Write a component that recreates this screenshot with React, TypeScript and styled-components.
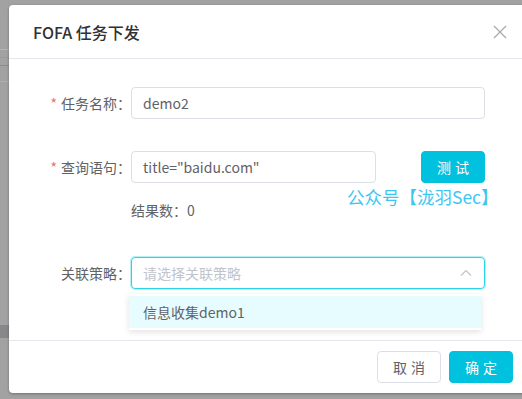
import React from "react";
import styled, { createGlobalStyle } from "styled-components";

const Global = createGlobalStyle`
  html, body { margin: 0; padding: 0; }
  body {
    background: #a2a2a3;
    overflow: hidden;
    width: 522px;
    height: 399px;
    font-family: "Noto Sans CJK SC", "Noto Sans", sans-serif;
  }
`;

const Backdrop = styled.div`
  position: relative;
  width: 522px;
  height: 399px;
  overflow: hidden;
  padding-top: 5px;
  box-sizing: border-box;
`;

const PageLine = styled.div<{ $top: number; $color: string; $h?: number }>`
  position: absolute;
  left: 0;
  width: 9px;
  top: ${(p) => p.$top}px;
  height: ${(p) => p.$h ?? 1}px;
  background: ${(p) => p.$color};
`;

const Dialog = styled.div`
  position: relative;
  margin-left: 9px;
  width: 520px;
  background: #fff;
  border-radius: 4px;
  box-shadow: 0 1px 3px rgba(0, 0, 0, 0.3);
  display: flex;
  flex-direction: column;
`;

const Header = styled.div`
  height: 54px;
  box-sizing: border-box;
  display: flex;
  align-items: center;
  justify-content: space-between;
  padding: 0 22px 0 24px;
  border-bottom: 1px solid #e4e7ed;
`;

const Title = styled.span`
  font-size: 16px;
  font-weight: 500;
  color: #303133;
  line-height: 20px;
`;

const Close = styled.button`
  border: 0;
  background: none;
  padding: 0;
  width: 14px;
  height: 14px;
  display: flex;
  align-items: center;
  justify-content: center;
  cursor: pointer;
`;

const Body = styled.div`
  padding: 28px 44px 0 22px;
  display: flex;
  flex-direction: column;
  height: 281px;
  box-sizing: border-box;
  position: relative;
`;

const Row = styled.div<{ $mb: number }>`
  display: grid;
  grid-template-columns: 100px 1fr;
  align-items: start;
  margin-bottom: ${(p) => p.$mb}px;
`;

const Label = styled.label`
  height: 32px;
  display: flex;
  align-items: center;
  justify-content: flex-end;
  font-size: 14px;
  color: #606266;
`;

const Star = styled.span`
  color: #f56c6c;
  margin-right: 4px;
`;

const Field = styled.div`
  display: flex;
  flex-direction: column;
  position: relative;
`;

const InputLine = styled.div`
  display: flex;
  align-items: center;
  justify-content: space-between;
`;

const Input = styled.div<{ $w?: number; $focus?: boolean }>`
  width: ${(p) => (p.$w ? `${p.$w}px` : "100%")};
  height: 32px;
  box-sizing: border-box;
  border: 1px solid ${(p) => (p.$focus ? "#2ad3ea" : "#dcdfe6")};
  box-shadow: ${(p) => (p.$focus ? "0 0 0 1px rgba(42, 211, 234, 0.35)" : "none")};
  border-radius: 4px;
  padding: 0 12px 0 11px;
  display: flex;
  align-items: center;
  justify-content: space-between;
  font-size: 14px;
  color: #606266;
`;

const Placeholder = styled.span`
  color: #c0c4cc;
`;

const Button = styled.button<{ $primary?: boolean }>`
  width: 64px;
  height: 32px;
  border-radius: 4px;
  box-sizing: border-box;
  font-family: inherit;
  font-size: 14px;
  letter-spacing: 4px;
  text-indent: 4px;
  display: flex;
  align-items: center;
  justify-content: center;
  padding: 0;
  cursor: pointer;
  border: 1px solid ${(p) => (p.$primary ? "#00c1de" : "#dcdfe6")};
  background: ${(p) => (p.$primary ? "#00c1de" : "#fff")};
  color: ${(p) => (p.$primary ? "#fff" : "#606266")};
`;

const Result = styled.div`
  font-size: 14px;
  color: #606266;
  margin-top: 17px;
  line-height: 20px;
`;

const Watermark = styled.div`
  position: absolute;
  left: 216px;
  top: 36px;
  font-size: 17.5px;
  color: #3ec6f2;
  white-space: nowrap;
  line-height: 20px;
`;

const Dropdown = styled.div`
  position: absolute;
  left: 120px;
  top: 235px;
  width: 352px;
  background: #fff;
  box-shadow: 0 2px 6px rgba(0, 0, 0, 0.12);
  padding-top: 2px;
  height: 34px;
  overflow: hidden;
`;

const Option = styled.div`
  height: 32px;
  display: flex;
  align-items: center;
  padding-left: 14px;
  background: #e6fcfe;
  font-size: 14px;
  color: #606266;
`;

const Footer = styled.div`
  border-top: 1px solid #e4e7ed;
  padding: 10px 16px 10px 0;
  display: flex;
  justify-content: flex-end;
  gap: 8px;
`;

const CloseIcon = () => (
  <svg width="14" height="14" viewBox="0 0 14 14">
    <path d="M1 1 L13 13 M13 1 L1 13" stroke="#a8abb2" strokeWidth="1.3" fill="none" />
  </svg>
);

const ArrowUp = () => (
  <svg width="12" height="8" viewBox="0 0 12 8">
    <path d="M1 6.5 L6 1.5 L11 6.5" stroke="#c0c4cc" strokeWidth="1.2" fill="none" />
  </svg>
);

export default function App() {
  return (
    <>
      <Global />
      <Backdrop>
        <PageLine $top={49} $color="#b4b4b6" />
        <PageLine $top={57} $color="#9a9a9c" />
        <PageLine $top={65} $color="#8c8c8e" $h={1} />
        <PageLine $top={81} $color="#b0b0b2" />
        <PageLine $top={325} $color="#88888a" $h={13} />
        <Dialog>
          <Header>
            <Title>FOFA 任务下发</Title>
            <Close aria-label="close">
              <CloseIcon />
            </Close>
          </Header>
          <Body>
            <Row $mb={32}>
              <Label>
                <Star>*</Star>任务名称：
              </Label>
              <Field>
                <Input>demo2</Input>
              </Field>
            </Row>
            <Row $mb={37}>
              <Label>
                <Star>*</Star>查询语句：
              </Label>
              <Field>
                <InputLine>
                  <Input $w={245}>title="baidu.com"</Input>
                  <Button $primary>测试</Button>
                </InputLine>
                <Result>结果数：0</Result>
                <Watermark>公众号【泷羽Sec】</Watermark>
              </Field>
            </Row>
            <Row $mb={0}>
              <Label>关联策略：</Label>
              <Field>
                <Input $focus>
                  <Placeholder>请选择关联策略</Placeholder>
                  <ArrowUp />
                </Input>
              </Field>
            </Row>
            <Dropdown>
              <Option>信息收集demo1</Option>
            </Dropdown>
          </Body>
          <Footer>
            <Button>取消</Button>
            <Button $primary>确定</Button>
          </Footer>
        </Dialog>
      </Backdrop>
    </>
  );
}
